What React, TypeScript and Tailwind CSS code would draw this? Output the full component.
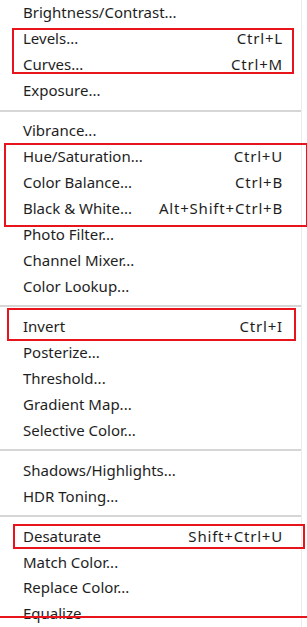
import React from "react";

type Item = { label: string; shortcut?: string } | "sep";

const items: Item[] = [
  { label: "Brightness/Contrast..." },
  { label: "Levels...", shortcut: "Ctrl+L" },
  { label: "Curves...", shortcut: "Ctrl+M" },
  { label: "Exposure..." },
  "sep",
  { label: "Vibrance..." },
  { label: "Hue/Saturation...", shortcut: "Ctrl+U" },
  { label: "Color Balance...", shortcut: "Ctrl+B" },
  { label: "Black & White...", shortcut: "Alt+Shift+Ctrl+B" },
  { label: "Photo Filter..." },
  { label: "Channel Mixer..." },
  { label: "Color Lookup..." },
  "sep",
  { label: "Invert", shortcut: "Ctrl+I" },
  { label: "Posterize..." },
  { label: "Threshold..." },
  { label: "Gradient Map..." },
  { label: "Selective Color..." },
  "sep",
  { label: "Shadows/Highlights..." },
  { label: "HDR Toning..." },
  "sep",
  { label: "Desaturate", shortcut: "Shift+Ctrl+U" },
  { label: "Match Color..." },
  { label: "Replace Color..." },
  { label: "Equalize" },
];

export default function App() {
  return (
    <div
      className="relative w-[307px] h-[627px] overflow-hidden bg-white text-[#1e1e1e] text-[15px]"
      style={{ fontFamily: '"Noto Sans", "Noto Sans CJK KR", sans-serif' }}
    >
      <div className="w-[302px] border-r border-[#ececec] h-full flex flex-col">
        {items.map((it, i) =>
          it === "sep" ? (
            <div key={i} className="h-[14px] flex items-center">
              <div className="h-[2px] w-full bg-[#d6d6d6]" />
            </div>
          ) : (
            <div key={i} className="h-[26px] flex items-center justify-between pl-[23px] pr-[18px] leading-none">
              <span>{it.label}</span>
              {it.shortcut && <span className="tracking-[0.8px]">{it.shortcut}</span>}
            </div>
          )
        )}
      </div>
      {/* red annotation boxes drawn over the menu */}
      <div className="absolute left-[12px] top-[28px] w-[282px] h-[46px] border-2 border-[#e8141c]" />
      <div className="absolute left-[4px] top-[143px] w-[304px] h-[84px] border-2 border-[#e8141c]" />
      <div className="absolute left-[7px] top-[308px] w-[289px] h-[33px] border-2 border-[#e8141c]" />
      <div className="absolute left-[13px] top-[524px] w-[292px] h-[25px] border-2 border-[#e8141c]" />
      <div className="absolute left-0 top-[616px] w-[307px] h-[2px] bg-[#e8141c]" />
    </div>
  );
}
